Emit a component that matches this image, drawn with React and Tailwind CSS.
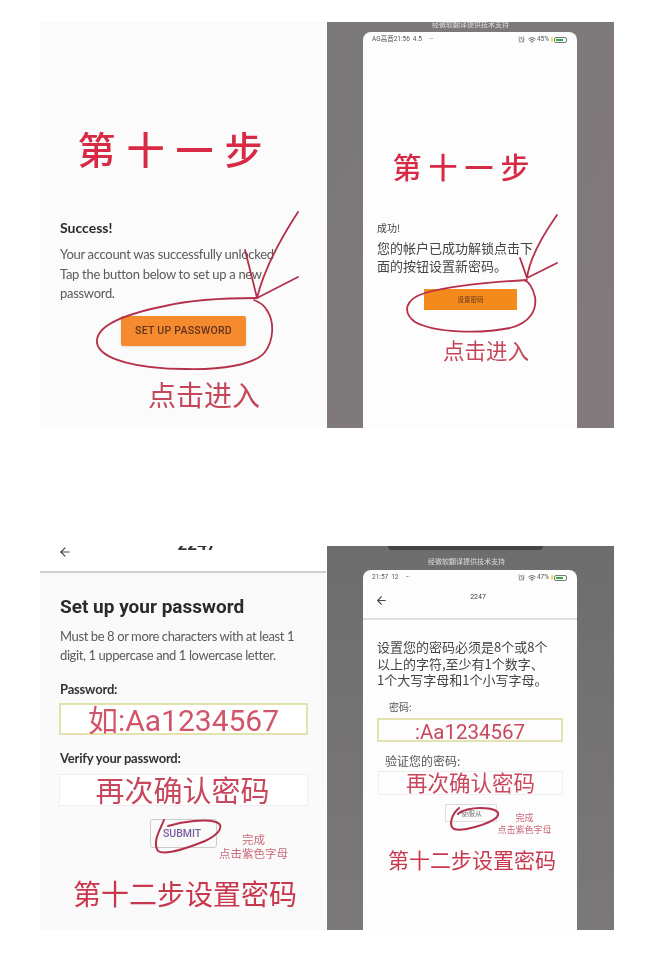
import { ArrowLeft, Wifi, AlarmClock } from 'lucide-react'

const cjk = "font-['Noto_Sans_CJK_SC',sans-serif]"
const ui = "font-['Lato','Noto_Sans_CJK_SC',sans-serif]"
const roboto = "font-['Roboto','Noto_Sans_CJK_SC',sans-serif]"

// red pen marks, drawn in page coordinates through the viewBox
function Scribble({ box, children }) {
    return (
        <svg className="absolute inset-0 w-full h-full pointer-events-none" viewBox={box} fill="none" stroke="#b5304a" strokeLinecap="round" strokeLinejoin="round">
            {children}
        </svg>
    )
}

function StatusBar({ time, extra, level }) {
    return (
        <div className={`flex items-center h-[15px] pl-[9px] pr-[10px] ${roboto} text-[6.5px] text-[#555]`}>
            <span>{time}</span>
            <span className="ml-[3px]">{extra}</span>
            <span className="ml-[7px] tracking-tighter">···</span>
            <AlarmClock className="ml-auto w-[7px] h-[7px]" strokeWidth={2} />
            <Wifi className="ml-[3px] w-[8px] h-[8px]" strokeWidth={2.5} />
            <span className="ml-[1px]">{level}</span>
            <span className="ml-[2px] w-[2px] h-[5px] bg-[#e8e060]" />
            <span className="ml-[1px] flex items-center w-[13px] h-[6px] rounded-[2px] border border-[#777] p-[1px]">
                <span className="h-full w-[7px] bg-[#2fae4a]" />
            </span>
        </div>
    )
}

function TopLeft() {
    return (
        <div className="relative w-[286px] h-[406px] bg-[#fbfbfb] overflow-hidden">
            <div className={`flex justify-center gap-[11px] pt-[103px] pr-[26px] ${cjk} text-[38px] leading-[46px] font-medium text-[#d62a45]`}>
                <span>第</span><span>十</span><span>一</span><span>步</span>
            </div>
            <div className={`mt-[48px] pl-[20px] ${ui}`}>
                <h2 className="text-[14px] leading-[18px] font-bold text-[#2a2a2a]">Success!</h2>
                <p className="mt-[8px] text-[13px] tracking-[-0.3px] leading-[19.5px] text-[#5a5a5a]">
                    Your account was successfully unlocked<br />
                    Tap the button below to set up a new<br />
                    password.
                </p>
            </div>
            <div className="mt-[12px] pl-[81px]">
                <button className={`w-[125px] h-[30px] rounded-[2px] bg-[#f58a2e] shadow-sm ${roboto} text-[10.5px] font-medium tracking-wide text-[#5f3320]`}>
                    SET UP PASSWORD
                </button>
            </div>
            <div className={`mt-[31px] pl-[108px] ${cjk} text-[28px] leading-[34px] text-[#c4475a]`}>点击进入</div>
            <Scribble box="40 22 286 406">
                <path strokeWidth="1.8" d="M257 298 C225 298 190 300 165 306 C125 314 95 326 97 343 C100 360 140 369 185 369 C220 370 255 365 265 352 C274 340 274 322 268 312 C265 306 260 302 254 300" />
                <path strokeWidth="1.8" d="M298 212 C285 232 265 265 257 298 M245 250 C250 270 254 285 257 298 L298 277" />
            </Scribble>
        </div>
    )
}

function TopRight() {
    return (
        <div className="relative w-[287px] h-[406px] bg-linear-to-br from-[#7a7879] to-[#837a7c] overflow-hidden">
            <div className={`h-[10px] -mt-[3px] text-center ${cjk} text-[7px] text-[#ddd]`}>经微软翻译提供技术支持</div>
            <div className="ml-[36px] mt-[3px] w-[214px] h-[396px] rounded-t-[8px] bg-[#fdfdfd]">
                <StatusBar time="AG高音21:56" extra="4.5" level="45%" />
                <div className={`flex justify-center gap-[7px] pt-[97px] pr-[18px] ${cjk} text-[29px] leading-[44px] font-medium text-[#d62a45]`}>
                    <span>第</span><span>十</span><span>一</span><span>步</span>
                </div>
                <div className={`mt-[33px] pl-[14px] ${cjk} text-[#444]`}>
                    <div className="text-[10px] leading-[14px]">成功!</div>
                    <p className="mt-[4px] text-[13px] leading-[18px]">您的帐户已成功解锁点击下<br />面的按钮设置新密码。</p>
                </div>
                <div className="mt-[14px] ml-[61px]">
                    <div className={`flex items-center justify-center w-[93px] h-[21px] bg-[#f58a1c] ${cjk} text-[6.5px] text-[#5f3320]`}>设置密码</div>
                </div>
                <div className={`mt-[27px] ml-[80px] ${cjk} text-[21.5px] leading-[26px] text-[#c4475a]`}>点击进入</div>
            </div>
            <Scribble box="327 22 287 406">
                <path strokeWidth="1.8" d="M527 280 C490 282 450 286 425 293 C405 299 402 312 415 322 C435 333 480 334 510 328 C530 323 537 310 535 297 C533 288 529 282 524 280" />
                <path strokeWidth="1.8" d="M557 215 C545 232 530 255 527 278 M520 258 L527 278 L557 263" />
            </Scribble>
        </div>
    )
}

function BottomLeft() {
    return (
        <div className="relative w-[286px] h-[384px] bg-[#fafafa] overflow-hidden">
            <div className="relative h-[27px] border-b-2 border-[#cfcfcf] bg-white">
                <ArrowLeft className="absolute left-[18px] -top-[1px] w-[14px] h-[14px] text-[#444]" />
                <div className={`absolute left-0 right-0 -top-[11px] pl-[28px] text-center ${roboto} text-[17px] font-bold text-[#333] leading-[18px]`}>2247</div>
            </div>
            <div className="pl-[20px]">
                <h1 className={`mt-[22px] ${roboto} text-[19px] leading-[24px] font-bold text-[#2a2a2a]`}>Set up your password</h1>
                <p className={`mt-[8px] ${ui} text-[13px] tracking-[-0.4px] leading-[19px] text-[#5a5a5a]`}>
                    Must be 8 or more characters with at least 1<br />
                    digit, 1 uppercase and 1 lowercase letter.
                </p>
                <div className={`mt-[16px] ${ui} text-[13px] tracking-[-0.2px] leading-[16px] font-bold text-[#333]`}>Password:</div>
            </div>
            <div className={`mt-[6px] ml-[19px] w-[249px] h-[32px] flex items-center justify-center border-2 border-[#e4e2ae] bg-white pt-[3px] ${roboto} text-[30px] text-[#d2566a]`}>如:Aa1234567</div>
            <div className={`mt-[15px] ml-[20px] ${ui} text-[13px] tracking-[-0.2px] leading-[16px] font-bold text-[#333]`}>Verify your password:</div>
            <div className={`mt-[8px] ml-[19px] w-[249px] h-[32px] flex items-center justify-center border border-[#eeeeee] bg-white pr-[2px] ${cjk} text-[29px] text-[#c9475c]`}>再次确认密码</div>
            <div className="flex mt-[13px]">
                <div className={`ml-[110px] w-[67px] h-[29px] border border-[#ccc] rounded-[3px] pl-[12px] ${roboto} text-[10.5px] leading-[28px] font-medium text-[#7b5ea0]`}>SUBMIT</div>
                <div className={`ml-[1px] mt-[13px] w-[71px] text-center ${cjk} text-[11.5px] leading-[14px] text-[#c96a78]`}>完成<br />点击紫色字母</div>
            </div>
            <div className={`mt-[15px] ml-[33px] ${cjk} text-[28px] leading-[36px] text-[#c9374e]`}>第十二步设置密码</div>
            <Scribble box="40 546 286 384">
                <path strokeWidth="2" d="M164 820 C160 830 152 842 158 851 C165 856 190 847 205 841 C220 834 225 825 216 822 C205 819 185 821 168 826" />
            </Scribble>
        </div>
    )
}

function BottomRight() {
    return (
        <div className="relative w-[287px] h-[384px] bg-linear-to-b from-[#6e6d6e] to-[#7b7879] overflow-hidden">
            <div className="mx-auto w-[155px] h-[4px] rounded-b-[4px] bg-[#444] -translate-x-[5px]" />
            <div className={`mt-[6px] text-center pr-[8px] ${cjk} text-[7px] leading-[10px] text-[#ddd]`}>经微软翻译提供技术支持</div>
            <div className="ml-[36px] mt-[4px] w-[214px] h-[360px] rounded-t-[8px] bg-[#fdfdfd]">
                <StatusBar time="21:57" extra="12" level="47%" />
                <div className="relative h-[35px] border-b-2 border-[#dedede]">
                    <ArrowLeft className="absolute left-[12px] top-[9px] w-[13px] h-[13px] text-[#444]" />
                    <div className={`pt-[7px] pl-[16px] text-center ${roboto} text-[7px] text-[#444]`}>2247</div>
                </div>
                <p className={`mt-[19px] ml-[14px] ${cjk} text-[13px] leading-[16.7px] text-[#444]`}>
                    设置您的密码必须是8个或8个<br />
                    以上的字符,至少有1个数字、<br />
                    1个大写字母和1个小写字母。
                </p>
                <div className={`mt-[11px] ml-[26px] ${cjk} text-[10px] leading-[14px] text-[#555]`}>密码:</div>
                <div className={`mt-[4px] ml-[14px] w-[186px] h-[24px] flex items-center justify-center border-2 border-[#e4e2ae] pt-[4px] ${roboto} text-[20.5px] text-[#c9475c]`}>:Aa1234567</div>
                <div className={`mt-[11px] ml-[22px] ${cjk} text-[12px] leading-[16px] text-[#555]`}>验证您的密码:</div>
                <div className={`mt-[2px] ml-[15px] w-[185px] h-[24px] flex items-center justify-center border border-[#eeeeee] pb-[2px] ${cjk} text-[21.5px] text-[#c9475c]`}>再次确认密码</div>
                <div className="flex mt-[9px]">
                    <div className={`ml-[82px] w-[52px] h-[18px] border border-[#ddd] pl-[15px] ${cjk} text-[7px] leading-[16px] text-[#777]`}>使服从</div>
                    <div className={`mt-[8px] w-[55px] text-center ${cjk} text-[9px] leading-[12px] text-[#c96a78]`}>完成<br />点击紫色字母</div>
                </div>
                <div className={`mt-[9px] ml-[25px] ${cjk} text-[21px] leading-[28px] text-[#c9374e]`}>第十二步设置密码</div>
            </div>
            <Scribble box="327 546 287 384">
                <path strokeWidth="2" d="M459 808 C452 814 448 825 454 829 C462 832 490 824 497 817 C502 811 492 808 480 808 C472 808 462 810 458 814" />
            </Scribble>
        </div>
    )
}

export default function App() {
    return (
        <div className="w-[654px] h-[962px] bg-white overflow-hidden pt-[22px] pl-[40px] blur-[0.4px]">
            <div className="flex gap-[1px]">
                <TopLeft />
                <TopRight />
            </div>
            <div className="flex gap-[1px] mt-[118px]">
                <BottomLeft />
                <BottomRight />
            </div>
        </div>
    )
}
